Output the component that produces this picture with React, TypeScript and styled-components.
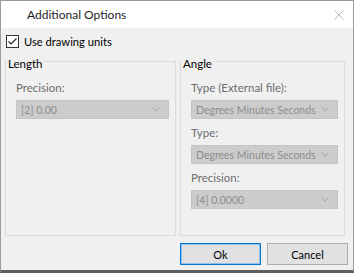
import styled, { createGlobalStyle } from "styled-components";

const GlobalStyle = createGlobalStyle`
  html, body {
    margin: 0;
    padding: 0;
    background: #ffffff;
  }
  * {
    box-sizing: border-box;
  }
`;

const Window = styled.div`
  width: 354px;
  height: 273px;
  display: flex;
  flex-direction: column;
  border: 1px solid #9b9b9b;
  border-bottom: 3px solid #5e5e5e;
  background: #f0f0f0;
  font-family: Lato, "Noto Sans", sans-serif;
  font-size: 11px;
  color: #000;
`;

const TitleBar = styled.div`
  height: 27px;
  flex: none;
  display: flex;
  align-items: center;
  justify-content: space-between;
  background: #ffffff;
  padding: 0 9px 0 26px;
`;

const Title = styled.span`
  font-size: 12px;
  color: #1e1e1e;
`;

const Body = styled.div`
  flex: 1;
  display: flex;
  flex-direction: column;
  padding: 7px 4px 0 4px;
`;

const CheckRow = styled.label`
  display: flex;
  align-items: center;
  gap: 5px;
  height: 13px;
  padding-left: 1px;
  font-size: 11.2px;
`;

const CheckBox = styled.span`
  width: 13px;
  height: 13px;
  border: 1px solid #333333;
  background: #ffffff;
  display: flex;
  align-items: center;
  justify-content: center;
`;

const Groups = styled.div`
  display: flex;
  gap: 4px;
  margin-top: 13px;
`;

const GroupBox = styled.div<{ $width: number }>`
  width: ${p => p.$width}px;
  height: 175px;
  border: 1px solid #dcdcdc;
  display: flex;
  flex-direction: column;
`;

const GroupTitle = styled.span`
  align-self: flex-start;
  margin: -6px 0 0 1px;
  padding: 0 1px;
  line-height: 16px;
  font-size: 11.5px;
  background: #f0f0f0;
`;

const Fields = styled.div<{ $left: number }>`
  display: flex;
  flex-direction: column;
  gap: 6px;
  padding: 8px 6px 0 ${p => p.$left}px;
`;

const Field = styled.div`
  display: flex;
  flex-direction: column;
  gap: 4px;
`;

const FieldLabel = styled.span`
  line-height: 16px;
  font-size: 11.5px;
  color: #6d6d6d;
  white-space: nowrap;
`;

const Select = styled.div`
  height: 19px;
  display: flex;
  align-items: center;
  justify-content: space-between;
  padding: 0 8px 0 4px;
  background: #cccccc;
  border: 1px solid #c4c4c4;
  color: #8d8d8d;
  font-size: 10.5px;
  white-space: nowrap;
`;

const Buttons = styled.div`
  display: flex;
  justify-content: flex-end;
  gap: 6px;
  margin-top: 7px;
  padding-right: 1px;
`;

const Button = styled.button<{ $default?: boolean }>`
  width: 81px;
  height: 22px;
  font-family: inherit;
  font-size: 11px;
  color: #000;
  background: #e1e1e1;
  border: 1px solid ${p => (p.$default ? "#0078d7" : "#adadad")};
  box-shadow: ${p => (p.$default ? "inset 0 0 0 1px #8fbfea" : "none")};
  padding: 0;
`;

const Chevron = () => (
  <svg width="8" height="5" viewBox="0 0 8 5">
    <path d="M0.5 0.5 L4 4 L7.5 0.5" fill="none" stroke="#a6a6a6" strokeWidth="1" />
  </svg>
);

function SelectField({ label, value }: { label: string; value: string }) {
  return (
    <Field>
      <FieldLabel>{label}</FieldLabel>
      <Select>
        <span>{value}</span>
        <Chevron />
      </Select>
    </Field>
  );
}

function App() {
  return (
    <>
      <GlobalStyle />
      <Window>
        <TitleBar>
          <Title>Additional Options</Title>
          <svg width="10" height="10" viewBox="0 0 10 10">
            <path d="M0.5 0.5 L9.5 9.5 M9.5 0.5 L0.5 9.5" stroke="#b4b4b4" strokeWidth="1" />
          </svg>
        </TitleBar>
        <Body>
          <CheckRow>
            <CheckBox>
              <svg width="11" height="11" viewBox="0 0 11 11">
                <path d="M1.5 5.5 L4 8 L9.5 2.5" fill="none" stroke="#222" strokeWidth="1.1" />
              </svg>
            </CheckBox>
            Use drawing units
          </CheckRow>
          <Groups>
            <GroupBox $width={171}>
              <GroupTitle>Length</GroupTitle>
              <Fields $left={10}>
                <SelectField label="Precision:" value="[2] 0.00" />
              </Fields>
            </GroupBox>
            <GroupBox $width={165}>
              <GroupTitle>Angle</GroupTitle>
              <Fields $left={10}>
                <SelectField label="Type (External file):" value="Degrees Minutes Seconds" />
                <SelectField label="Type:" value="Degrees Minutes Seconds" />
                <SelectField label="Precision:" value="[4] 0.0000" />
              </Fields>
            </GroupBox>
          </Groups>
          <Buttons>
            <Button $default>Ok</Button>
            <Button>Cancel</Button>
          </Buttons>
        </Body>
      </Window>
    </>
  );
}

export default App;
